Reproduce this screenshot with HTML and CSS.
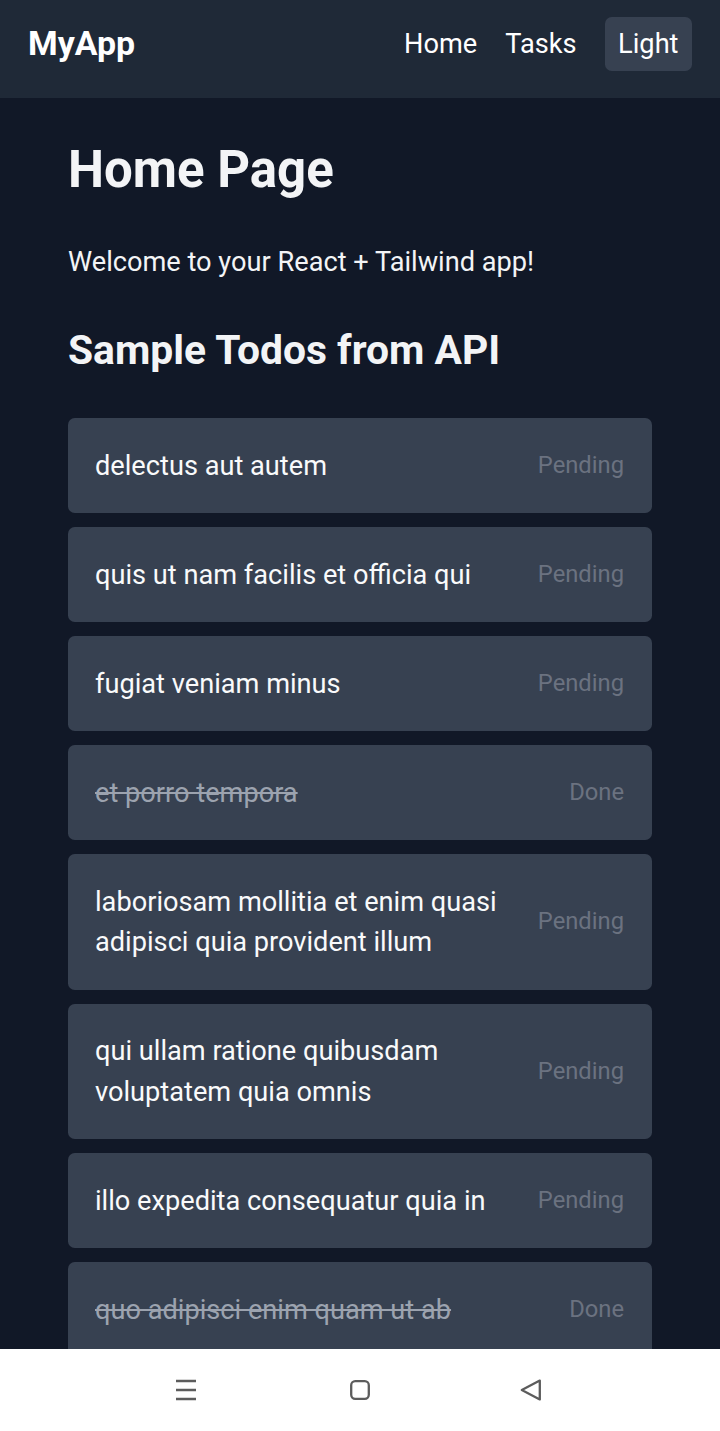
FILE: index.html
```html
<!DOCTYPE html>
<html lang="en">
<head>
<meta charset="utf-8">
<title>MyApp</title>
<link rel="stylesheet" href="styles.css">
</head>
<body>
<div class="app">
  <header class="topbar">
    <div class="brand">MyApp</div>
    <nav class="nav">
      <a class="nav-link">Home</a>
      <a class="nav-link">Tasks</a>
      <button class="theme-btn">Light</button>
    </nav>
  </header>
  <main class="main">
    <h1 class="title">Home Page</h1>
    <p class="lead">Welcome to your React + Tailwind app!</p>
    <h2 class="subtitle">Sample Todos from API</h2>
    <ul class="todos">
      <li class="todo"><span class="todo-text">delectus aut autem</span><span class="todo-status">Pending</span></li>
      <li class="todo"><span class="todo-text">quis ut nam facilis et officia qui</span><span class="todo-status">Pending</span></li>
      <li class="todo"><span class="todo-text">fugiat veniam minus</span><span class="todo-status">Pending</span></li>
      <li class="todo"><span class="todo-text done">et porro tempora</span><span class="todo-status">Done</span></li>
      <li class="todo"><span class="todo-text">laboriosam mollitia et enim quasi adipisci quia provident illum</span><span class="todo-status">Pending</span></li>
      <li class="todo"><span class="todo-text">qui ullam ratione quibusdam voluptatem quia omnis</span><span class="todo-status">Pending</span></li>
      <li class="todo"><span class="todo-text">illo expedita consequatur quia in</span><span class="todo-status">Pending</span></li>
      <li class="todo"><span class="todo-text done">quo adipisci enim quam ut ab</span><span class="todo-status">Done</span></li>
    </ul>
  </main>
  <div class="sysbar">
    <svg class="sys-icon sys-menu" viewBox="0 0 22 22" width="22" height="22" aria-hidden="true">
      <path d="M1 2h20M1 11h20M1 20h20" stroke="#5c5c5c" stroke-width="2.3" fill="none"/>
    </svg>
    <svg class="sys-icon sys-home" viewBox="0 0 22 22" width="22" height="22" aria-hidden="true">
      <rect x="2.2" y="2.2" width="17.6" height="17.6" rx="4" stroke="#5c5c5c" stroke-width="2.3" fill="none"/>
    </svg>
    <svg class="sys-icon sys-back" viewBox="0 0 22 22" width="22" height="22" aria-hidden="true">
      <path d="M19.8 1.6 L1.8 11 L19.8 20.4 Z" stroke="#5c5c5c" stroke-width="2.3" stroke-linejoin="round" fill="none"/>
    </svg>
  </div>
</div>
</body>
</html>
```
FILE: styles.css
```css
* { box-sizing: border-box; }

html, body {
  margin: 0;
  padding: 0;
  height: 100%;
}

body {
  font-family: Roboto, "Noto Sans", "Liberation Sans", sans-serif;
  background: #111827;
  color: #f3f4f6;
}

.app {
  height: 100vh;
  display: flex;
  flex-direction: column;
  overflow: hidden;
}

.topbar {
  flex: none;
  height: 98px;
  background: #1f2937;
  display: flex;
  align-items: center;
  justify-content: space-between;
  padding: 17px 28px 27px 28px;
}

.brand {
  font-size: 33.9px;
  font-weight: 700;
  color: #ffffff;
  line-height: 54px;
}

.nav {
  display: flex;
  align-items: center;
  gap: 28px;
}

.nav-link {
  font-size: 27.2px;
  line-height: 40.5px;
  color: #ffffff;
  text-decoration: none;
}

.theme-btn {
  font-family: inherit;
  font-size: 27.2px;
  line-height: 40.5px;
  color: #ffffff;
  background: #374151;
  border: none;
  border-radius: 6.75px;
  padding: 6.75px 13.5px;
  height: 54px;
  margin: 0;
}

.main {
  flex: 1;
  min-height: 0;
  overflow: hidden;
  padding: 42px 68px 0 68px;
}

.title {
  margin: 0;
  font-size: 51px;
  line-height: 60.75px;
  font-weight: 700;
  color: #f3f4f6;
}

.lead {
  margin: 41px 0 0 0;
  font-size: 27.2px;
  line-height: 40.5px;
  color: #f3f4f6;
}

.subtitle {
  margin: 40.5px 0 0 0;
  font-size: 40.8px;
  line-height: 54px;
  font-weight: 700;
  color: #f3f4f6;
}

.todos {
  list-style: none;
  margin: 41.5px 0 0 0;
  padding: 0;
  display: flex;
  flex-direction: column;
  gap: 14px;
}

.todo {
  background: #374151;
  border-radius: 6.75px;
  padding: 27.25px 28px 27.25px 27px;
  display: flex;
  align-items: center;
  justify-content: space-between;
  gap: 20px;
}

.todo-text {
  font-size: 27.2px;
  line-height: 40.5px;
  color: #f9fafb;
}

.todo-text.done {
  color: #9ca3af;
  text-decoration: line-through;
}

.todo-status {
  flex: none;
  font-size: 23.75px;
  line-height: 33.75px;
  color: #6b7280;
}

.sysbar {
  flex: none;
  height: 82px;
  background: #ffffff;
  display: flex;
  align-items: center;
  padding-left: 175px;
}

.sys-icon {
  width: 22px;
  height: 22px;
  display: block;
  flex: none;
}

.sys-home {
  margin-left: 152px;
}

.sys-back {
  margin-left: 148.5px;
}
```
